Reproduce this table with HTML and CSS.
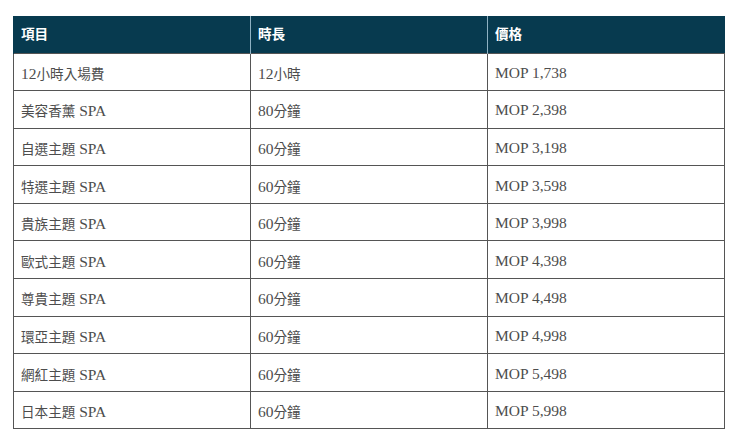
FILE: index.html
```html
<!DOCTYPE html>
<html lang="zh-Hant">
<head>
<meta charset="utf-8">
<link rel="stylesheet" href="styles.css">
</head>
<body>
<div class="wrap">
<table class="price-table">
<thead>
<tr><th><span class="cjk">項目</span></th><th><span class="cjk">時長</span></th><th><span class="cjk">價格</span></th></tr>
</thead>
<tbody>
<tr><td>12<span class="cjk">小時入場費</span></td><td>12<span class="cjk">小時</span></td><td>MOP 1,738</td></tr>
<tr><td><span class="cjk">美容香薰</span> SPA</td><td>80<span class="cjk">分鐘</span></td><td>MOP 2,398</td></tr>
<tr><td><span class="cjk">自選主題</span> SPA</td><td>60<span class="cjk">分鐘</span></td><td>MOP 3,198</td></tr>
<tr><td><span class="cjk">特選主題</span> SPA</td><td>60<span class="cjk">分鐘</span></td><td>MOP 3,598</td></tr>
<tr><td><span class="cjk">貴族主題</span> SPA</td><td>60<span class="cjk">分鐘</span></td><td>MOP 3,998</td></tr>
<tr><td><span class="cjk">歐式主題</span> SPA</td><td>60<span class="cjk">分鐘</span></td><td>MOP 4,398</td></tr>
<tr><td><span class="cjk">尊貴主題</span> SPA</td><td>60<span class="cjk">分鐘</span></td><td>MOP 4,498</td></tr>
<tr><td><span class="cjk">環亞主題</span> SPA</td><td>60<span class="cjk">分鐘</span></td><td>MOP 4,998</td></tr>
<tr><td><span class="cjk">網紅主題</span> SPA</td><td>60<span class="cjk">分鐘</span></td><td>MOP 5,498</td></tr>
<tr><td><span class="cjk">日本主題</span> SPA</td><td>60<span class="cjk">分鐘</span></td><td>MOP 5,998</td></tr>
</tbody>
</table>
</div>
</body>
</html>
```
FILE: styles.css
```css
html, body {
  margin: 0;
  padding: 0;
  background: #ffffff;
}
.wrap {
  padding: 16px 15px 0 13px;
}
.price-table {
  width: 712px;
  border-collapse: collapse;
  table-layout: fixed;
  font-family: "Liberation Serif", "Noto Sans CJK TC", serif;
  font-size: 15.5px;
  color: #4d4d4d;
}
.cjk {
  font-family: "Noto Sans CJK TC", sans-serif;
  font-size: 13.6px;
}
.price-table th {
  background: #073a4f;
  color: #ffffff;
  font-weight: bold;
  text-align: left;
  height: 37px;
  padding: 0 8px 2px 7px;
  box-sizing: border-box;
  border-left: 1px solid #8fb1c2;
  vertical-align: middle;
}
.price-table th:first-child {
  border-left: 1px solid #073a4f;
}
.price-table td {
  height: 37.6px;
  padding: 2px 8px 0 7px;
  box-sizing: border-box;
  border: 1px solid #555555;
  vertical-align: middle;
}
```
